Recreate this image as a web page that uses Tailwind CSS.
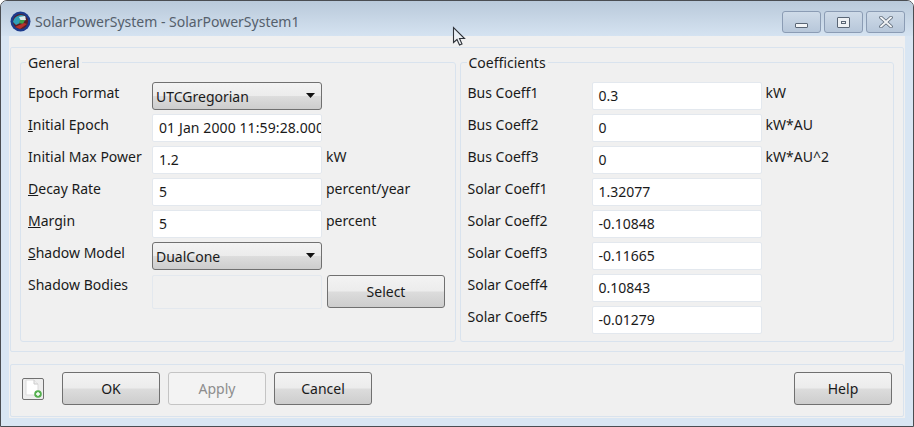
<!DOCTYPE html>
<html><head><meta charset="utf-8"><script src="https://cdn.jsdelivr.net/npm/@tailwindcss/browser@4"></script></head>
<body class="m-0 bg-white">
<div class="relative w-[914px] h-[427px] overflow-hidden flex flex-col border border-[#4a4d52] rounded-t-[7px] bg-[#d9e6f3] text-[14px] leading-[20px] text-[#1a1a1a] font-['Noto_Sans','Open_Sans',sans-serif]">
  <header class="h-[35px] shrink-0 flex items-start justify-between pl-[9px] pr-[8px] pt-[10px] bg-gradient-to-b from-[#b9c9da] to-[#d5e3f1]">
    <div class="flex items-center gap-[4px]">
      <svg class="w-[21px] h-[21px]" viewBox="0 0 21 21"><circle cx="10.500" cy="10.500" r="10" fill="#1c3a8c"/><circle cx="10.500" cy="10.500" r="7.500" fill="#5a1f25"/><path d="M3 11a8 8 0 0 1 13-5l-4 5-6 3z" fill="#2f9fb8"/><path d="M9 6l6-1 1 4-5 1z" fill="#dfe8e8"/><path d="M10 9l5 0-2 4-4-1z" fill="#3ba14c"/><path d="M5 16l9-4 3 1-7 5z" fill="#b5332d"/></svg>
      <span class="text-[#55606c] text-[14px]">SolarPowerSystem - SolarPowerSystem1</span>
    </div>
    <div class="flex gap-[3px]">
      <div class="w-[39px] h-[22px] rounded-[3px] border border-[#8b9cb4] bg-gradient-to-b from-[#cfdbe8] to-[#b7c7da] flex items-center justify-center"><span class="block w-[13px] h-[5px] mt-[6px] bg-[#f3f5f7] border border-[#5a6675] rounded-[1px]"></span></div>
      <div class="w-[39px] h-[22px] rounded-[3px] border border-[#8b9cb4] bg-gradient-to-b from-[#cfdbe8] to-[#b7c7da] flex items-center justify-center"><span class="flex items-center justify-center w-[13px] h-[11px] bg-[#eef1f4] border border-[#5a6675] rounded-[1px]"><span class="block w-[5px] h-[3px] border border-[#5a6675]"></span></span></div>
      <div class="w-[39px] h-[22px] rounded-[3px] border border-[#8b9cb4] bg-gradient-to-b from-[#cfdbe8] to-[#b7c7da] flex items-center justify-center"><svg class="w-[14px] h-[12px]" viewBox="0 0 14 12"><path d="M2 1.500l10 9M12 1.500l-10 9" stroke="#5a6675" stroke-width="3.600" stroke-linecap="round"/><path d="M2 1.500l10 9M12 1.500l-10 9" stroke="#f1f3f5" stroke-width="2" stroke-linecap="round"/></svg></div>
    </div>
  </header>

  <main class="flex-1 mx-[8px] flex flex-col bg-[#f0f0f0] px-[1px] pt-[11px] pb-[1px]">
    <section class="h-[305px] shrink-0 border border-[#d9e3ee] rounded-[2px] flex gap-[4px] pl-[9px] pr-[9px] pt-[14px] pb-[9px]">
      <fieldset class="relative w-[436px] border border-[#d9e3ee] rounded-[3px] pl-[7px] pt-[19px]">
        <legend class="absolute -top-[10px] left-[5px] bg-[#f0f0f0] px-[2px] text-[#1a1a1a]">General</legend>
        <div class="grid grid-cols-[124px_170px_auto] auto-rows-[28px] gap-y-[4px]">
          <span class="mt-[1px]">Epoch Format</span>
          <div class="col-span-2 w-[170px] flex items-center justify-between rounded-[3px] border border-[#707070] pl-[3px] pr-[5px] bg-[linear-gradient(#f3f3f3_0%,#ececec_48%,#dcdcdc_52%,#cdcdcd_100%)] pt-[2px]"><span>UTCGregorian</span><svg class="w-[9px] h-[5px] mr-[1px] mb-[3px]" viewBox="0 0 9 5"><path d="M0 0h9L4.500 5z" fill="#111"/></svg></div>

          <span class="mt-[1px]"><u>I</u>nitial Epoch</span>
          <div class="col-span-2 w-[170px] overflow-hidden whitespace-nowrap tracking-[0.1px] rounded-[2px] border border-[#e3e8ee] bg-white pl-[6px] pt-[3px]">01 Jan 2000 11:59:28.000</div>

          <span class="mt-[1px] whitespace-nowrap">Initial Max Power</span>
          <div class="rounded-[2px] border border-[#e3e8ee] bg-white pl-[6px] pt-[3px]">1.2</div>
          <span class="pl-[4px] mt-[1px]">kW</span>

          <span class="mt-[1px]"><u>D</u>ecay Rate</span>
          <div class="rounded-[2px] border border-[#e3e8ee] bg-white pl-[6px] pt-[3px]">5</div>
          <span class="pl-[4px] mt-[1px]">percent/year</span>

          <span class="mt-[1px]"><u>M</u>argin</span>
          <div class="rounded-[2px] border border-[#e3e8ee] bg-white pl-[6px] pt-[3px]">5</div>
          <span class="pl-[4px] mt-[1px]">percent</span>

          <span class="mt-[1px]"><u>S</u>hadow Model</span>
          <div class="col-span-2 w-[170px] flex items-center justify-between rounded-[3px] border border-[#707070] pl-[3px] pr-[5px] bg-[linear-gradient(#f3f3f3_0%,#ececec_48%,#dcdcdc_52%,#cdcdcd_100%)] pt-[2px]"><span>DualCone</span><svg class="w-[9px] h-[5px] mr-[1px] mb-[3px]" viewBox="0 0 9 5"><path d="M0 0h9L4.500 5z" fill="#111"/></svg></div>

          <span class="mt-[1px]">Shadow Bodies</span>
          <div class="col-span-2 flex gap-[5px] mt-[1px]">
            <div class="w-[170px] h-[34px] shrink-0 rounded-[2px] border border-[#e3e8ee] bg-[#f0f0f0]"></div>
            <div class="w-[118px] h-[33px] rounded-[3px] border border-[#707070] bg-[linear-gradient(#f3f3f3_0%,#ececec_48%,#dcdcdc_52%,#cdcdcd_100%)] flex items-center justify-center">Select</div>
          </div>
        </div>
      </fieldset>

      <fieldset class="relative w-[435px] border border-[#d9e3ee] rounded-[3px] pl-[7px] pt-[19px]">
        <legend class="absolute -top-[10px] left-[6px] bg-[#f0f0f0] px-[2px]">Coefficients</legend>
        <div class="grid grid-cols-[124px_170px_auto] auto-rows-[28px] gap-y-[4px]">
          <span class="mt-[1px]">Bus Coeff1</span><div class="rounded-[2px] border border-[#e3e8ee] bg-white pl-[6px] pt-[3px]">0.3</div><span class="pl-[4px] mt-[1px]">kW</span>
          <span class="mt-[1px]">Bus Coeff2</span><div class="rounded-[2px] border border-[#e3e8ee] bg-white pl-[6px] pt-[3px]">0</div><span class="pl-[4px] mt-[1px]">kW*AU</span>
          <span class="mt-[1px]">Bus Coeff3</span><div class="rounded-[2px] border border-[#e3e8ee] bg-white pl-[6px] pt-[3px]">0</div><span class="pl-[4px] mt-[1px]">kW*AU^2</span>
          <span class="mt-[1px]">Solar Coeff1</span><div class="rounded-[2px] border border-[#e3e8ee] bg-white pl-[6px] pt-[3px]">1.32077</div><span></span>
          <span class="mt-[1px]">Solar Coeff2</span><div class="rounded-[2px] border border-[#e3e8ee] bg-white pl-[6px] pt-[3px]">-0.10848</div><span></span>
          <span class="mt-[1px]">Solar Coeff3</span><div class="rounded-[2px] border border-[#e3e8ee] bg-white pl-[6px] pt-[3px]">-0.11665</div><span></span>
          <span class="mt-[1px]">Solar Coeff4</span><div class="rounded-[2px] border border-[#e3e8ee] bg-white pl-[6px] pt-[3px]">0.10843</div><span></span>
          <span class="mt-[1px]">Solar Coeff5</span><div class="rounded-[2px] border border-[#e3e8ee] bg-white pl-[6px] pt-[3px]">-0.01279</div><span></span>
        </div>
      </fieldset>
    </section>

    <footer class="mt-[12px] h-[53px] shrink-0 border border-[#d9e3ee] rounded-[2px] flex items-center pl-[11px] pr-[11px] pb-[4px]">
      <div class="w-[22px] h-[22px] mr-[18px] rounded-[2px] border border-[#707070] bg-[#eeeeee] flex items-center justify-center">
        <svg class="w-[20px] h-[20px]" viewBox="0 0 20 20"><path d="M3 1h8l4 4v11H3z" fill="#fff" stroke="#dcdcdc"/><path d="M11 1v4h4" fill="#eee" stroke="#ccc"/><circle cx="15" cy="15" r="3.800" fill="#55b04f"/><path d="M13 15h4M15 13v4" stroke="#fff" stroke-width="1.400"/></svg>
      </div>
      <div class="flex gap-[8px]">
        <button class="w-[98px] h-[33px] rounded-[3px] border border-[#707070] bg-[linear-gradient(#f3f3f3_0%,#ececec_48%,#dcdcdc_52%,#cdcdcd_100%)]">OK</button>
        <button class="w-[98px] h-[33px] rounded-[3px] border border-[#c4c4c4] bg-[#f3f3f3] text-[#8d8d8d]">Apply</button>
        <button class="w-[98px] h-[33px] rounded-[3px] border border-[#707070] bg-[linear-gradient(#f3f3f3_0%,#ececec_48%,#dcdcdc_52%,#cdcdcd_100%)]">Cancel</button>
      </div>
      <button class="ml-auto w-[98px] h-[33px] rounded-[3px] border border-[#707070] bg-[linear-gradient(#f3f3f3_0%,#ececec_48%,#dcdcdc_52%,#cdcdcd_100%)]">Help</button>
    </footer>
  </main>
  <div class="h-[9px] shrink-0 bg-[#d9e6f3]"></div>

  <svg class="absolute left-[451px] top-[25px] w-[14px] h-[20px]" viewBox="0 0 14 20"><path d="M1.500 1.500v15l3.500-3 2.500 5.500 2.500-1-2.500-5.500h5z" fill="#eef2f6" fill-opacity="0.75" stroke="#30343a" stroke-width="1.100"/></svg>
</div>
</body></html>
